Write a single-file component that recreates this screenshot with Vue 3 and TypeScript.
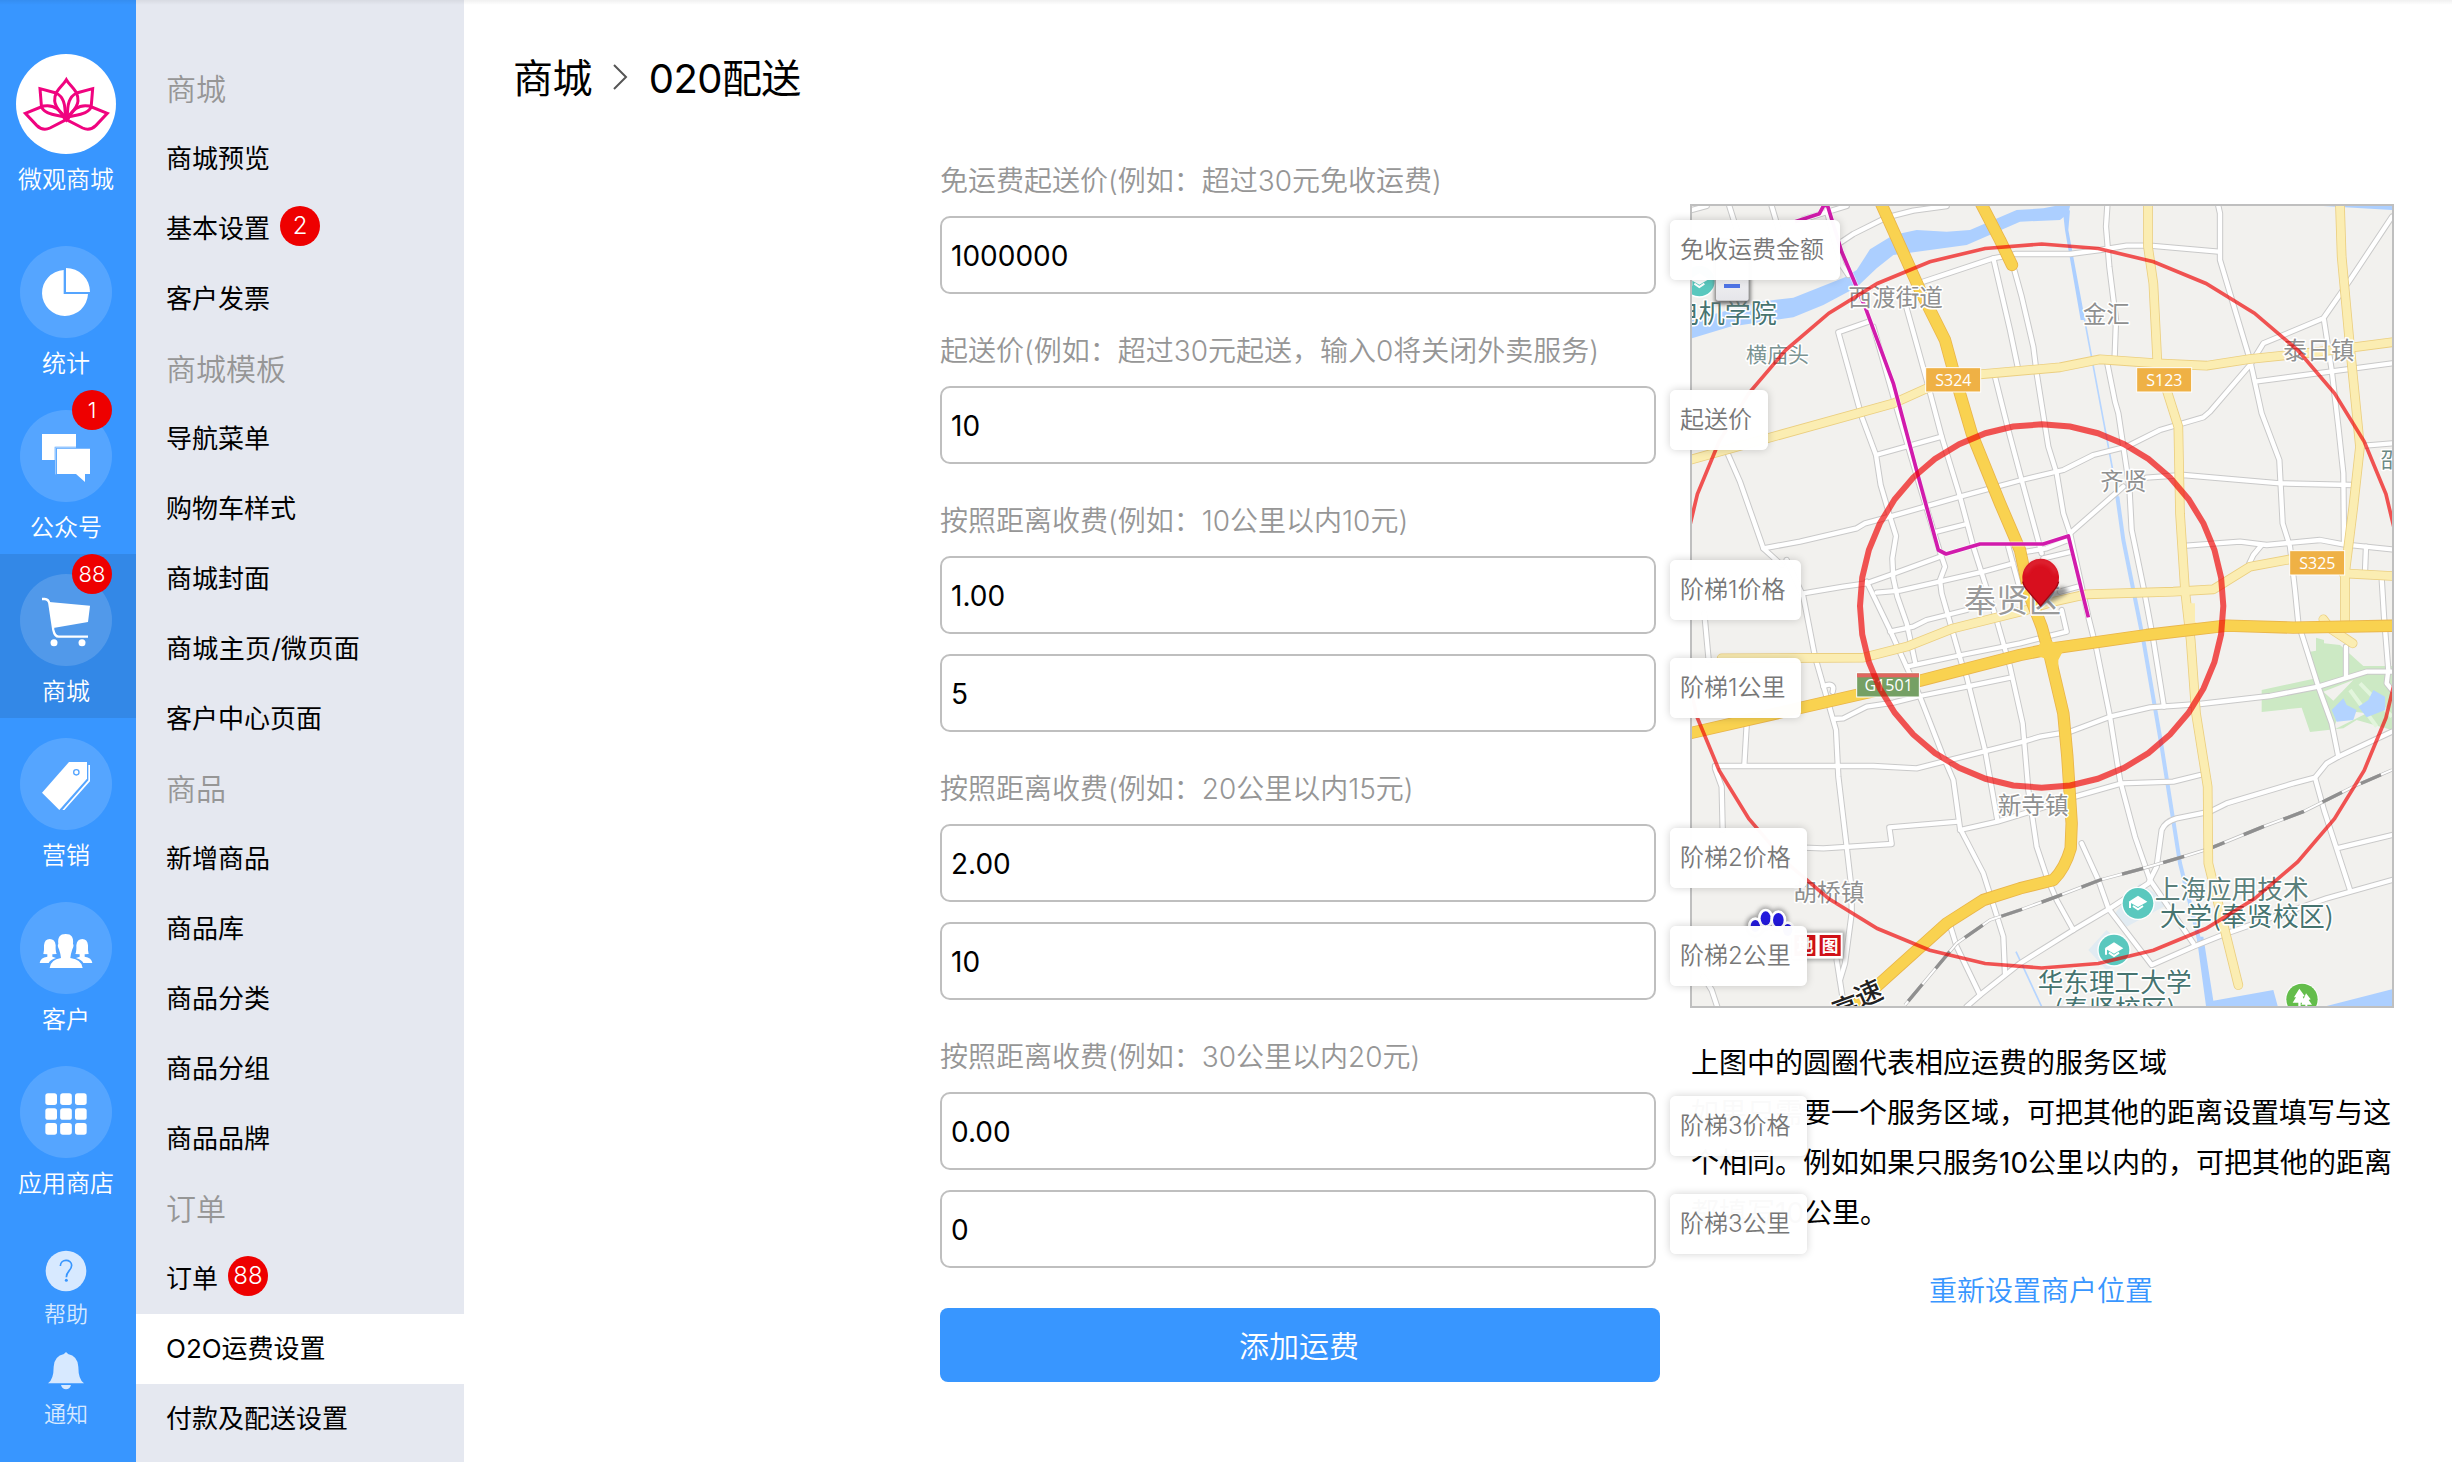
<script setup lang="ts">
import { ref } from 'vue'

interface RailItem { icon: string; label: string; badge?: string; active?: boolean }
interface MenuItem { text: string; head?: boolean; badge?: string; active?: boolean; loose?: boolean }
interface Field { value: string; tip: string }
interface Group { label: string; fields: Field[] }

const rail: RailItem[] = [
  { icon: 'pie', label: '统计' },
  { icon: 'chat', label: '公众号', badge: '1' },
  { icon: 'cart', label: '商城', badge: '88', active: true },
  { icon: 'tag', label: '营销' },
  { icon: 'users', label: '客户' },
  { icon: 'grid', label: '应用商店' },
]

const menu: MenuItem[] = [
  { text: '商城', head: true },
  { text: '商城预览' },
  { text: '基本设置', badge: '2' },
  { text: '客户发票' },
  { text: '商城模板', head: true },
  { text: '导航菜单' },
  { text: '购物车样式' },
  { text: '商城封面' },
  { text: '商城主页/微页面', loose: true },
  { text: '客户中心页面' },
  { text: '商品', head: true },
  { text: '新增商品' },
  { text: '商品库' },
  { text: '商品分类' },
  { text: '商品分组' },
  { text: '商品品牌' },
  { text: '订单', head: true },
  { text: '订单', badge: '88' },
  { text: 'O2O运费设置', active: true },
  { text: '付款及配送设置' },
]

const groups = ref<Group[]>([
  { label: '免运费起送价(例如：超过30元免收运费)', fields: [{ value: '1000000', tip: '免收运费金额' }] },
  { label: '起送价(例如：超过30元起送，输入0将关闭外卖服务)', fields: [{ value: '10', tip: '起送价' }] },
  { label: '按照距离收费(例如：10公里以内10元)', fields: [{ value: '1.00', tip: '阶梯1价格' }, { value: '5', tip: '阶梯1公里' }] },
  { label: '按照距离收费(例如：20公里以内15元)', fields: [{ value: '2.00', tip: '阶梯2价格' }, { value: '10', tip: '阶梯2公里' }] },
  { label: '按照距离收费(例如：30公里以内20元)', fields: [{ value: '0.00', tip: '阶梯3价格' }, { value: '0', tip: '阶梯3公里' }] },
])

const notes = [
  '上图中的圆圈代表相应运费的服务区域',
  '如果只需要一个服务区域，可把其他的距离设置填写与这',
  '个相同。例如如果只服务10公里以内的，可把其他的距离',
  '都填写10公里。',
]

// Street network, in map units (three per pixel)
const streets = [
  'M96,90 L140,78',
  'M208,78 L240,180',
  'M335,78 L365,180',
  'M430,118 L560,78',
  'M500,90 L525,190 L545,255 L565,285',
  'M535,192 L580,162 L680,112 L760,92 L860,78',
  'M625,425 L535,457 L605,710 L648,825 L662,915 L690,1010 L708,1068 L697,1135 L700,1195 L712,1250 L740,1330 L765,1445',
  'M740,385 L800,600 L845,770 L900,950 L940,1100 L975,1210 L1010,1320 L1050,1460 L1088,1630 L1105,1830 L1130,2000 L1160,2090 L1190,2160 L1240,2250',
  'M640,440 L700,650 L780,920 L838,1110 L855,1160 L840,1200 L845,1240 L905,1450 L920,1490 L975,1710 L1012,1920',
  'M790,305 L1000,235 L1065,222 L1230,222 L1320,210 L1400,197 L1470,197 L1675,215',
  'M1000,235 L1050,450 L1075,570 M1005,590 L1045,750 L1085,900 L1145,1120',
  'M1063,270 L1085,350 L1120,500 L1130,580 L1165,800 L1190,880 L1210,1000 L1230,1060 L1285,1310 L1310,1410 L1350,1610 L1380,1800 L1425,1970 L1470,2100 L1525,2180 L1600,2290',
  'M648,825 L845,770',
  'M310,1105 L420,1085 L590,1045 L615,1030 L690,1010 L900,950 L1085,900 L1210,870 L1300,825 L1400,800 L1500,750 L1630,712 L1650,695 L1770,555 L1810,490 L1990,415 L2070,300 L2196,110',
  'M205,825 L240,905 L310,1105 L365,1155',
  'M380,1140 L430,1250 L465,1430 L508,1580 L528,1650 L535,1790 L560,2000 L575,2130 L575,2200 L555,2350 L540,2400',
  'M530,2340 L552,2480',
  'M830,1055 L920,1032',
  'M430,1240 L550,1220 L620,1210 L690,1185 L840,1130',
  'M650,1238 L720,1232 L970,1175 L1060,1150 M1045,1100 L1075,1210',
  'M620,1205 L690,1350 L780,1550 L850,1730 L880,1800 L900,1945 L970,2080 L1030,2270 L1035,2380',
  'M870,2235 L890,2300 L960,2445',
  'M690,1355 L760,1340 L800,1320 L920,1290',
  'M1100,1115 L1160,1105 L1230,1078 M1150,1135 L1235,1115 M1200,1235 L1255,1220',
  'M1230,1060 L1390,920',
  'M1460,893 L1570,885 L1860,910 L2075,915',
  'M1342,78 L1338,140 L1348,260 L1368,420 L1364,530 M1342,550 L1365,665 L1375,700 L1390,800 L1408,920 L1415,1050 L1450,1220 L1480,1380 L1512,1580',
  'M1675,78 L1680,100 L1680,240 L1695,290 L1770,540 L1805,700 L1858,840 L1868,1030 L1890,1100 L1905,1230 L1915,1330 L1975,1520 L2015,1630 L2035,1730',
  'M1785,605 L2010,575 L2196,550',
  'M1992,420 L2015,570 L2035,740 L2050,880 L2052,1090',
  'M1580,1097 L1740,1085 L1820,1095 L1980,1080 L2050,1093 L2196,1108',
  'M1805,1095 L1780,1125 L1768,1150',
  'M2118,1100 L2115,1175 M2165,1195 L2172,1310 L2185,1470 L2180,1510 L2196,1530',
  'M2115,797 L2196,790',
  'M740,1460 L905,1425 L1080,1390 L1220,1355 L1205,1290',
  'M520,1617 L550,1615 L620,1580 L700,1568 L780,1548 L920,1520 L1055,1492',
  'M490,1520 C510,1508 525,1515 518,1535',
  'M165,1758 L640,1758 L770,1765 L850,1745 L970,1715 L1090,1685 L1140,1670 L1230,1655 L1350,1610 L1470,1582 L1620,1572 L1830,1548 L1975,1520 L2120,1475 L2196,1475',
  'M260,1635 L253,1755 M165,1765 L185,1820 L188,1950 M133,1300 L146,1440',
  'M430,2003 L490,2005 L695,1992 L688,1942 L895,1925',
  'M900,1950 L1012,1925 L1120,1892 L1245,1850 L1385,1810 L1540,1805 L1620,1785',
  'M130,2390 L155,2430 L175,2490',
  'M920,2480 L960,2445 L1080,2350 L1240,2250 L1350,2185 L1465,2110 L1490,2060 L1505,1950 Q1515,1925 1550,1915 L1650,1895 L1700,1870 L1900,1810 L1965,1793 L2000,1750 L2035,1730 L2196,1655',
  'M1265,1990 L1315,2100 L1345,2185 L1475,2355 L1600,2300 L1700,2260 L2000,2155 L2196,2100',
  'M1965,1793 L1992,1890 L2070,2130 M2030,2005 L2196,1965',
  'M2058,1400 L2058,1490',
]

const avenues = [
  'M96,838 L340,770 L700,670 L800,625 L960,583 L1200,562 L1320,538 L1490,550 L1640,557 L1770,537 L1980,515 L2196,487',
  'M1464,78 L1464,200 L1480,310 L1492,545',
  'M1520,630 L1555,740 L1560,1000 L1575,1230 L1592,1380 L1608,1600 L1643,1820 L1645,2050 L1735,2415',
  'M2040,78 L2045,230 L2070,500 L2100,800 L2080,980 L2055,1180 L2055,1330',
  'M185,1435 L610,1433 L740,1400 L880,1345 L1100,1290 L1180,1265 L1280,1243 L1540,1235 L1660,1228 L1770,1160 L1890,1138',
  'M2050,1180 L2196,1188',
  'M1990,1318 L2010,1345 L2078,1390',
]

const highways = [
  'M663,70 L780,330 L855,480 L885,590 L935,760 L1020,970 L1080,1110 L1110,1250 L1145,1340 L1170,1430 L1210,1600 L1222,1730 L1235,1930 L1232,2005 Q1215,2065 1180,2100 L1080,2125 L970,2160 L860,2230 L560,2500',
  'M963,70 L1020,180 L1056,255',
  'M80,1662 L590,1545 L780,1502 L1080,1425 L1180,1405 L1460,1365 L1700,1337 L1900,1343 L2210,1337',
]

const railway = 'M735,2475 L890,2290 L990,2220 L1080,2190 L1190,2150 L1320,2100 L1450,2065 L1570,2030 L1650,2005 L1810,1940 L1930,1895 L2080,1820 L2196,1770'
const route = 'M405,125 L478,101 L492,75 L503,78 L545,215 L615,380 L700,610 L775,890 L835,1110 L858,1122 L960,1092 L1150,1092 L1225,1068 L1285,1312'

// The delivery range is drawn as a forty-sided ring round the shop
function ring(radius: number): string {
  return Array.from({ length: 40 }, (_, i) => {
    const a = (i * Math.PI) / 20
    return `${(1145 + radius * Math.sin(a)).toFixed(1)},${(1278 - radius * Math.cos(a)).toFixed(1)}`
  }).join(' ')
}

const places = [
  { t: '电机学院', x: 38, y: 430, s: 78, c: '#467470' },
  { t: '西渡街道', x: 565, y: 379, s: 71, c: '#8f9090' },
  { t: '横庙头', x: 258, y: 545, s: 63, c: '#7c9492' },
  { t: '金汇', x: 1269, y: 428, s: 70, c: '#8f9090' },
  { t: '泰日镇', x: 1870, y: 536, s: 71, c: '#8f9090' },
  { t: '邵', x: 2162, y: 860, s: 63, c: '#6b8884' },
  { t: '齐贤', x: 1321, y: 930, s: 70, c: '#8f9090' },
  { t: '奉贤区', x: 912, y: 1297, s: 97, c: '#9a9a9a' },
  { t: '新寺镇', x: 1013, y: 1903, s: 71, c: '#8f9090' },
  { t: '胡桥镇', x: 400, y: 2164, s: 71, c: '#8f9090' },
  { t: '上海应用技术', x: 1484, y: 2158, s: 77, c: '#5a7f7b' },
  { t: '大学(奉贤校区)', x: 1500, y: 2239, s: 78, c: '#467470' },
  { t: '华东理工大学', x: 1133, y: 2437, s: 77, c: '#467470' },
  { t: '(奉贤校区)', x: 1182, y: 2517, s: 78, c: '#467470' },
]

const shields = [
  { t: 'S324', x: 797, y: 563 },
  { t: 'S123', x: 1430, y: 563 },
  { t: 'S325', x: 1889, y: 1112 },
]

const schools = [
  { x: 118, y: 303 },
  { x: 1434, y: 2170 },
  { x: 1362, y: 2310 },
]
</script>

<template>
  <div class="page">
    <aside class="rail">
      <div class="brand">
        <svg class="avatar" viewBox="48 162 300 300">
          <circle cx="198" cy="312" r="150" fill="#fff" />
          <g fill="none" stroke="#f0037f" stroke-width="9" stroke-linejoin="miter">
            <path d="M199 239 C187 260 163 270 164 303 C166 328 190 340 199 358 C208 340 232 328 234 303 C235 270 211 260 199 239Z" />
            <path d="M120 266 L168 279 C190 290 196 310 196 352 C180 345 125 345 124 315Z" />
            <path d="M278 266 L230 279 C208 290 202 310 202 352 C218 345 273 345 274 315Z" />
            <path d="M76 340 L130 318 C165 312 180 330 196 360 L150 384 Q128 394 110 376Z" />
            <path d="M322 340 L268 318 C233 312 218 330 202 360 L248 384 Q270 394 288 376Z" />
          </g>
        </svg>
        <span>微观商城</span>
      </div>
      <div v-for="item in rail" :key="item.label" class="rail-item" :class="{ active: item.active }">
        <svg class="disc" viewBox="0 0 276 276" fill="#fff">
          <circle class="disc-bg" cx="138" cy="138" r="138" />
          <template v-if="item.icon === 'pie'">
            <path d="M131 72 A69 69 0 1 0 204 144 H131Z" />
            <path d="M138 66 A72 72 0 0 1 210 138 H138Z" />
          </template>
          <template v-else-if="item.icon === 'chat'">
            <path d="M66 72 H168 V110 H104 V150 H66Z" />
            <path d="M111 116 H210 V192 H195 V216 L168 192 H111Z" />
            <path d="M107 193 V112 H168" fill="none" stroke="#a8d0ff" stroke-width="3" />
          </template>
          <template v-else-if="item.icon === 'cart'">
            <path d="M66 75 H74 Q86 76 88 88 L100 168 Q104 188 116 188 H204" fill="none" stroke="#fff" stroke-width="7" />
            <path d="M88 84 L210 95 L204 144 L100 162Z" />
            <circle cx="102" cy="206" r="10.5" />
            <circle cx="186" cy="206" r="10.5" />
          </template>
          <template v-else-if="item.icon === 'tag'">
            <path d="M147 72 H201 V122 L118 216 L66 164Z" />
            <path d="M205 81 H210 V130 L133 216 H127 L205 127Z" />
            <circle cx="169" cy="103" r="8" fill="none" stroke="#55a5ff" stroke-width="4" />
          </template>
          <template v-else-if="item.icon === 'users'">
            <path d="M70 156 Q73 146 72 130 Q74 111 89 111 Q105 111 107 130 Q106 148 110 156 L97 157 V164 L108 168 Q90 174 86 183 H59 Q61 167 82 164 V157Z" />
            <path d="M206 156 Q203 146 204 130 Q202 111 187 111 Q171 111 169 130 Q170 148 166 156 L179 157 V164 L168 168 Q186 174 190 183 H217 Q215 167 194 164 V157Z" />
            <path d="M137 96 C155 96 161 106 159 126 Q163 130 157 142 Q152 157 151 168 Q186 173 188 198 H89 Q91 173 123 168 Q122 157 117 142 Q111 130 115 126 C113 106 119 96 137 96Z" />
          </template>
          <template v-else>
            <rect v-for="n in 9" :key="n" :x="76 + ((n - 1) % 3) * 44.5" :y="82 + Math.floor((n - 1) / 3) * 44.5" width="35" height="35" rx="8" />
          </template>
        </svg>
        <b v-if="item.badge" class="badge">{{ item.badge }}</b>
        <span>{{ item.label }}</span>
      </div>
      <div class="rail-foot">
        <svg class="help" viewBox="0 0 126 126">
          <circle cx="63" cy="63" r="61" fill="#d7e9ff" />
          <path d="M46 48 C46 26 80 26 80 46 C80 62 64 62 64 82" fill="none" stroke="#3896ff" stroke-width="5" />
          <circle cx="64" cy="91" r="4.5" fill="#3896ff" />
        </svg>
        <span>帮助</span>
        <svg class="bell" viewBox="0 0 114 114" fill="#d7e9ff">
          <path d="M51 6 Q57 -4 63 6 Q92 12 94 44 Q94 82 111 94 H3 Q20 82 20 44 Q22 12 51 6Z" />
          <path d="M42 99 H72 Q68 112 57 112 Q46 112 42 99Z" />
        </svg>
        <span>通知</span>
      </div>
    </aside>

    <nav class="menu">
      <div v-for="(m, i) in menu" :key="i" class="menu-row" :class="{ head: m.head, active: m.active, loose: m.loose }">
        <span>{{ m.text }}</span>
        <b v-if="m.badge" class="badge">{{ m.badge }}</b>
      </div>
    </nav>

    <main class="main">
      <header class="crumbs">
        <span>商城</span>
        <svg width="16" height="28" viewBox="0 0 16 28"><path d="M2 2 L14 14 L2 26" fill="none" stroke="#555" stroke-width="2" /></svg>
        <span>020配送</span>
      </header>
      <div class="content">
        <form class="form" @submit.prevent>
          <section v-for="g in groups" :key="g.label">
            <label>{{ g.label }}</label>
            <div v-for="f in g.fields" :key="f.tip" class="field">
              <input v-model="f.value" type="text" />
              <span class="tip">{{ f.tip }}</span>
            </div>
          </section>
          <button type="submit">添加运费</button>
        </form>

        <div class="side">
          <div class="map">
            <svg viewBox="96 78 2100 2400" width="700" height="800">
              <defs>
                <linearGradient id="ctl" x1="0" y1="0" x2="0" y2="1">
                  <stop offset="0" stop-color="#fff" />
                  <stop offset="1" stop-color="#e6e6ea" />
                </linearGradient>
                <filter id="soft" x="-50%" y="-50%" width="200%" height="200%"><feGaussianBlur stdDeviation="6" /></filter>
              </defs>
              <rect x="96" y="78" width="2100" height="2400" fill="#f2f1ee" />
              <!-- water -->
              <g fill="#accfff">
                <path d="M96,475 L210,440 L400,412 L490,375 L590,322 L650,265 L700,225 L920,195 L1080,125 L1200,120 L1225,100 L1230,78 L1185,78 L1150,85 L1070,90 L930,150 L860,155 L770,150 L700,165 L630,208 L590,270 L555,292 L400,353 L300,365 L96,420Z" />
                <path d="M1210,105 L1230,90 L1225,150 L1275,420 L1262,420 L1215,150Z" />
                <path d="M1610,2270 L1630,2270 L1660,2462 L1840,2430 L1853,2478 L1638,2478Z" />
                <path d="M2000,2478 L2196,2428 V2478Z" />
                <path d="M1990,78 L2196,90 V78Z" />
              </g>
              <path d="M1272,410 L1345,800 L1375,960" fill="none" stroke="#b6d5ff" stroke-width="5" />
              <path d="M1372,950 L1390,1080 L1420,1230 L1450,1380 L1505,1700 L1560,2050 L1620,2290" fill="none" stroke="#b6d5ff" stroke-width="12" />
              <path d="M1068,2315 L1145,2480" fill="none" stroke="#b6d5ff" stroke-width="5" />
              <!-- park -->
              <path d="M1968,1373 L1992,1380 V1390 L2040,1395 L2110,1458 H2196 V1650 L2090,1620 L2050,1645 L1950,1656 L1925,1583 L1805,1596 V1530 L1968,1495 L1950,1415 L1968,1412Z" fill="#cce9c4" />
              <path d="M1990,1535 L2080,1500 L2020,1562Z M2040,1590 L2120,1600 L2020,1650Z" fill="#f2f1ee" />
              <path d="M2100,1510 L2196,1610 M2070,1530 L2150,1640" stroke="#e2f5dc" stroke-width="12" />
              <path d="M2015,1590 L2050,1555 L2060,1575 L2090,1590 L2080,1620 L2030,1625Z M2095,1580 L2125,1560 L2140,1530 L2175,1550 L2176,1590 L2120,1612Z" fill="#b3d3ff" />
              <path d="M1365,2200 L1440,2110 L1530,2170 L1400,2240Z M1285,2310 L1340,2250 L1420,2330 L1340,2370Z" fill="#e1ebf2" />
              <!-- roads -->
              <g fill="none" stroke-linejoin="round">
                <path v-for="(d, i) in streets" :key="'sc' + i" :d="d" stroke="#c9c9c9" stroke-width="19" stroke-linecap="round" />
                <path v-for="(d, i) in streets" :key="'s' + i" :d="d" stroke="#fff" stroke-width="13" stroke-linecap="round" />
                <path :d="railway" stroke="#bdbdbd" stroke-width="10" />
                <path :d="railway" stroke="#fff" stroke-width="6" />
                <path :d="railway" stroke="#8f8f8f" stroke-width="10" stroke-dasharray="66 62" stroke-dashoffset="-15" />
                <path v-for="(d, i) in avenues" :key="'ac' + i" :d="d" stroke="#ebcf80" stroke-width="29" stroke-linecap="round" />
                <path v-for="(d, i) in avenues" :key="'a' + i" :d="d" stroke="#fbedb2" stroke-width="24" stroke-linecap="round" />
                <path d="M1590,1270 V1330 L1560,1345 H1632 L1605,1325 V1270" fill="#fbedb2" />
                <path v-for="(d, i) in highways" :key="'hc' + i" :d="d" stroke="#e9b54a" stroke-width="37" stroke-linecap="round" />
                <path v-for="(d, i) in highways" :key="'h' + i" :d="d" stroke="#f9d250" stroke-width="32" stroke-linecap="round" />
                <path d="M1120,1422 L1150,1375 L1190,1390 L1215,1402 L1195,1440 V1465 L1165,1440Z" fill="#f9d250" />
                <path :d="route" stroke="#fff" stroke-width="15" opacity=".6" />
                <path :d="route" stroke="#d11bac" stroke-width="11" />
              </g>
              <!-- points of interest -->
              <g v-for="(p, i) in schools" :key="'p' + i" :transform="`translate(${p.x} ${p.y})`">
                <circle r="50" fill="#fff" />
                <circle r="46" fill="#5ac8be" />
                <path d="M-28 -5 L0 -23 L28 -5 L0 11Z" fill="#fff" />
                <path d="M-24 -4 V14 M-15 8 L0 18 L15 8" fill="none" stroke="#fff" stroke-width="6" />
              </g>
              <g transform="translate(1926 2458)">
                <circle r="50" fill="#fff" />
                <circle r="47" fill="#64bd4b" />
                <path d="M-8 -32 L8 -10 L2 -8 L12 10 H-4 V22 H-11 V10 H-28 L-18 -6 H-24Z M12 -18 L26 0 L20 2 L30 16 H16 V24 H10 V16 H-2Z" fill="#fff" />
              </g>
              <!-- place names -->
              <text v-for="p in places" :key="p.t" class="place" :x="p.x" :y="p.y" :font-size="p.s" :fill="p.c">{{ p.t }}</text>
              <g class="place way" font-size="82" fill="#222">
                <text transform="translate(530 2527) rotate(-20)">高</text>
                <text transform="translate(600 2484) rotate(-24)">速</text>
              </g>
              <g class="shield" font-size="48" text-anchor="middle" fill="#fff">
                <g v-for="s in shields" :key="s.t">
                  <rect :x="s.x" :y="s.y" width="165" height="73" fill="#efb145" stroke="#fff" stroke-width="3" />
                  <text :x="s.x + 83" :y="s.y + 54">{{ s.t }}</text>
                </g>
                <rect x="590" y="1479" width="188" height="72" fill="#75a064" stroke="#fff" stroke-width="3" />
                <rect x="591" y="1480" width="186" height="12" fill="#e0665f" />
                <text x="686" y="1533">G1501</text>
              </g>
              <!-- delivery ranges -->
              <polygon :points="ring(1086)" fill="none" stroke="#e00" stroke-opacity=".66" stroke-width="11" />
              <polygon :points="ring(545)" fill="none" stroke="#e00" stroke-opacity=".66" stroke-width="18" />
              <!-- zoom control -->
              <rect x="165" y="180" width="106" height="192" rx="6" fill="#666" filter="url(#soft)" />
              <rect x="168" y="180" width="98" height="182" rx="6" fill="url(#ctl)" />
              <rect x="192" y="312" width="48" height="12" fill="#4f74e6" />
              <!-- provider mark -->
              <g stroke="#888" stroke-width="30" filter="url(#soft)" opacity=".75">
                <ellipse cx="317" cy="2215" rx="14" ry="20" />
                <ellipse cx="355" cy="2220" rx="15" ry="20" />
                <ellipse cx="286" cy="2238" rx="14" ry="18" />
                <rect x="410" y="2268" width="130" height="58" />
              </g>
              <g stroke="#fff" stroke-width="16" fill="#2319dc" paint-order="stroke">
                <ellipse cx="286" cy="2238" rx="14" ry="18" />
                <ellipse cx="383" cy="2250" rx="14" ry="18" />
                <ellipse cx="317" cy="2215" rx="15" ry="21" />
                <ellipse cx="355" cy="2220" rx="16" ry="21" />
              </g>
              <rect x="396" y="2258" width="152" height="78" fill="#fff" />
              <rect x="403" y="2265" width="63" height="63" fill="#d01018" />
              <rect x="479" y="2265" width="63" height="63" fill="#d01018" />
              <text class="mark" x="410" y="2315" font-size="50" fill="#fff">地</text>
              <text class="mark" x="485.500" y="2315" font-size="50" fill="#fff">图</text>
              <!-- shop pin -->
              <path d="M1142,1277 L1165,1235 Q1210,1210 1225,1232 Q1215,1250 1142,1277Z" fill="#444" opacity=".6" filter="url(#soft)" />
              <path d="M1142,1278 L1098,1226 A55 56 0 1 1 1186,1226Z" fill="#d80f1e" />
              <path d="M1096,1180 A48 50 0 0 1 1188,1180" fill="none" stroke="#ec5560" stroke-width="6" opacity=".7" filter="url(#soft)" />
              <path d="M1088,1205 A55 56 0 0 0 1098,1226 L1142,1278 L1186,1226 A55 56 0 0 0 1196,1205" fill="none" stroke="#a00813" stroke-width="4" />
            </svg>
          </div>
          <div class="notes">
            <p v-for="n in notes" :key="n">{{ n }}</p>
          </div>
          <a class="relocate">重新设置商户位置</a>
        </div>
      </div>
    </main>
  </div>
</template>

<style>
html, body { margin: 0; overflow: hidden; background: #fff; }
</style>

<style scoped>
.page {
  display: flex;
  width: 2452px;
  height: 1462px;
  overflow: hidden;
  font-family: Inter, "Noto Sans CJK SC", sans-serif;
  font-weight: 350;
  color: #000;
  position: relative;
}
.page::before {
  content: "";
  position: absolute;
  inset: 0 0 auto 0;
  height: 5px;
  background: linear-gradient(rgba(0, 0, 0, .06), rgba(0, 0, 0, 0));
}
.rail {
  width: 132px;
  padding-right: 4px;
  background: #3896ff;
  color: #fff;
  font-size: 24px;
  flex: none;
}
.rail span { line-height: 36px; white-space: nowrap; }
.brand {
  height: 172px;
  padding-top: 54px;
  display: flex;
  flex-direction: column;
  align-items: center;
}
.avatar { width: 100px; height: 100px; margin-bottom: 8px; }
.rail-item {
  position: relative;
  box-sizing: border-box;
  width: 136px;
  height: 164px;
  padding: 20px 4px 0 0;
  display: flex;
  flex-direction: column;
  align-items: center;
}
.rail-item.active { background: #3388e7; }
.disc { width: 92px; height: 92px; margin-bottom: 8px; }
.disc-bg { fill: rgba(255, 255, 255, .15); }
.badge {
  width: 40px;
  height: 40px;
  border-radius: 50%;
  background: #ee0000;
  color: #fff;
  font-size: 22px;
  font-weight: 300;
  line-height: 40px;
  text-align: center;
}
.rail-item .badge { position: absolute; left: 72px; top: 0; }
.rail-foot {
  margin-top: 40px;
  display: flex;
  flex-direction: column;
  align-items: center;
  font-size: 22px;
  color: #d7e9ff;
}
.help { width: 42px; height: 42px; margin-bottom: 4px; }
.bell { width: 38px; height: 38px; margin: 20px 0 6px; }

.menu { width: 328px; flex: none; background: #e5e8f0; padding-top: 54px; box-sizing: border-box; }
.menu-row {
  display: flex;
  align-items: center;
  height: 70px;
  padding-left: 30px;
  font-size: 26px;
  font-weight: 400;
}
.menu-row span { padding-bottom: 5px; }
.menu-row.head { font-size: 30px; font-weight: 350; color: #969696; }
.menu-row.active { background: #fff; }
.menu-row.loose { letter-spacing: .35px; }
.menu-row .badge { margin: 0 0 6px 10px; font-size: 24px; }

.main { flex: 1; }
.crumbs {
  box-sizing: border-box;
  height: 144px;
  padding: 8px 0 0 49px;
  display: flex;
  align-items: center;
  font-size: 40px;
  font-weight: 400;
  letter-spacing: -.6px;
}
.crumbs svg { margin: 2px 21px 0 20px; }
.content { display: flex; align-items: flex-start; padding-left: 476px; }
.form { width: 716px; flex: none; }
label {
  display: block;
  box-sizing: border-box;
  height: 72px;
  padding-top: 1px;
  line-height: 72px;
  font-size: 28px;
  color: #969696;
  white-space: nowrap;
}
.field { display: flex; align-items: flex-start; margin-bottom: 20px; }
input {
  box-sizing: border-box;
  width: 716px;
  height: 78px;
  flex: none;
  padding: 2px 9px 0;
  border: 2px solid #bfbfbf;
  border-radius: 10px;
  font: 400 28px Inter, "Noto Sans CJK SC", sans-serif;
  color: #000;
  background: #fff;
  outline: none;
}
.tip {
  position: relative;
  z-index: 1;
  flex: none;
  margin: 4px -300px 0 14px;
  padding: 0 16px 0 10px;
  line-height: 60px;
  font-size: 24px;
  color: #777;
  white-space: nowrap;
  border-radius: 6px;
  background: rgba(255, 255, 255, .98);
  box-shadow: 0 0 8px rgba(0, 0, 0, .18);
}
button {
  display: block;
  width: 720px;
  height: 74px;
  margin: 40px 0 0;
  padding: 0 2px 2px 0;
  border: 0;
  border-radius: 8px;
  background: #3896ff;
  color: #fff;
  font: 350 30px Inter, "Noto Sans CJK SC", sans-serif;
}
.side { width: 704px; flex: none; margin: 60px 0 0 34px; }
.map { box-sizing: border-box; width: 704px; height: 804px; border: 2px solid #bfbfbf; }
.map svg { display: block; }
.place {
  font-family: "Noto Sans CJK SC", sans-serif;
  font-weight: 400;
  stroke: #fff;
  stroke-width: 9px;
  stroke-linejoin: round;
  paint-order: stroke;
}
.way { font-weight: 500; }
.mark { font-family: "Noto Sans CJK SC", sans-serif; font-weight: 700; }
.shield { font-family: "Open Sans", sans-serif; font-weight: 400; }
.notes { margin: 30px 0 28px 1px; font-weight: 400; }
.notes p { margin: 0; font-size: 28px; line-height: 50px; white-space: nowrap; }
.relocate { display: block; padding-right: 2px; text-align: center; font-size: 28px; line-height: 50px; color: #3896ff; }
</style>
